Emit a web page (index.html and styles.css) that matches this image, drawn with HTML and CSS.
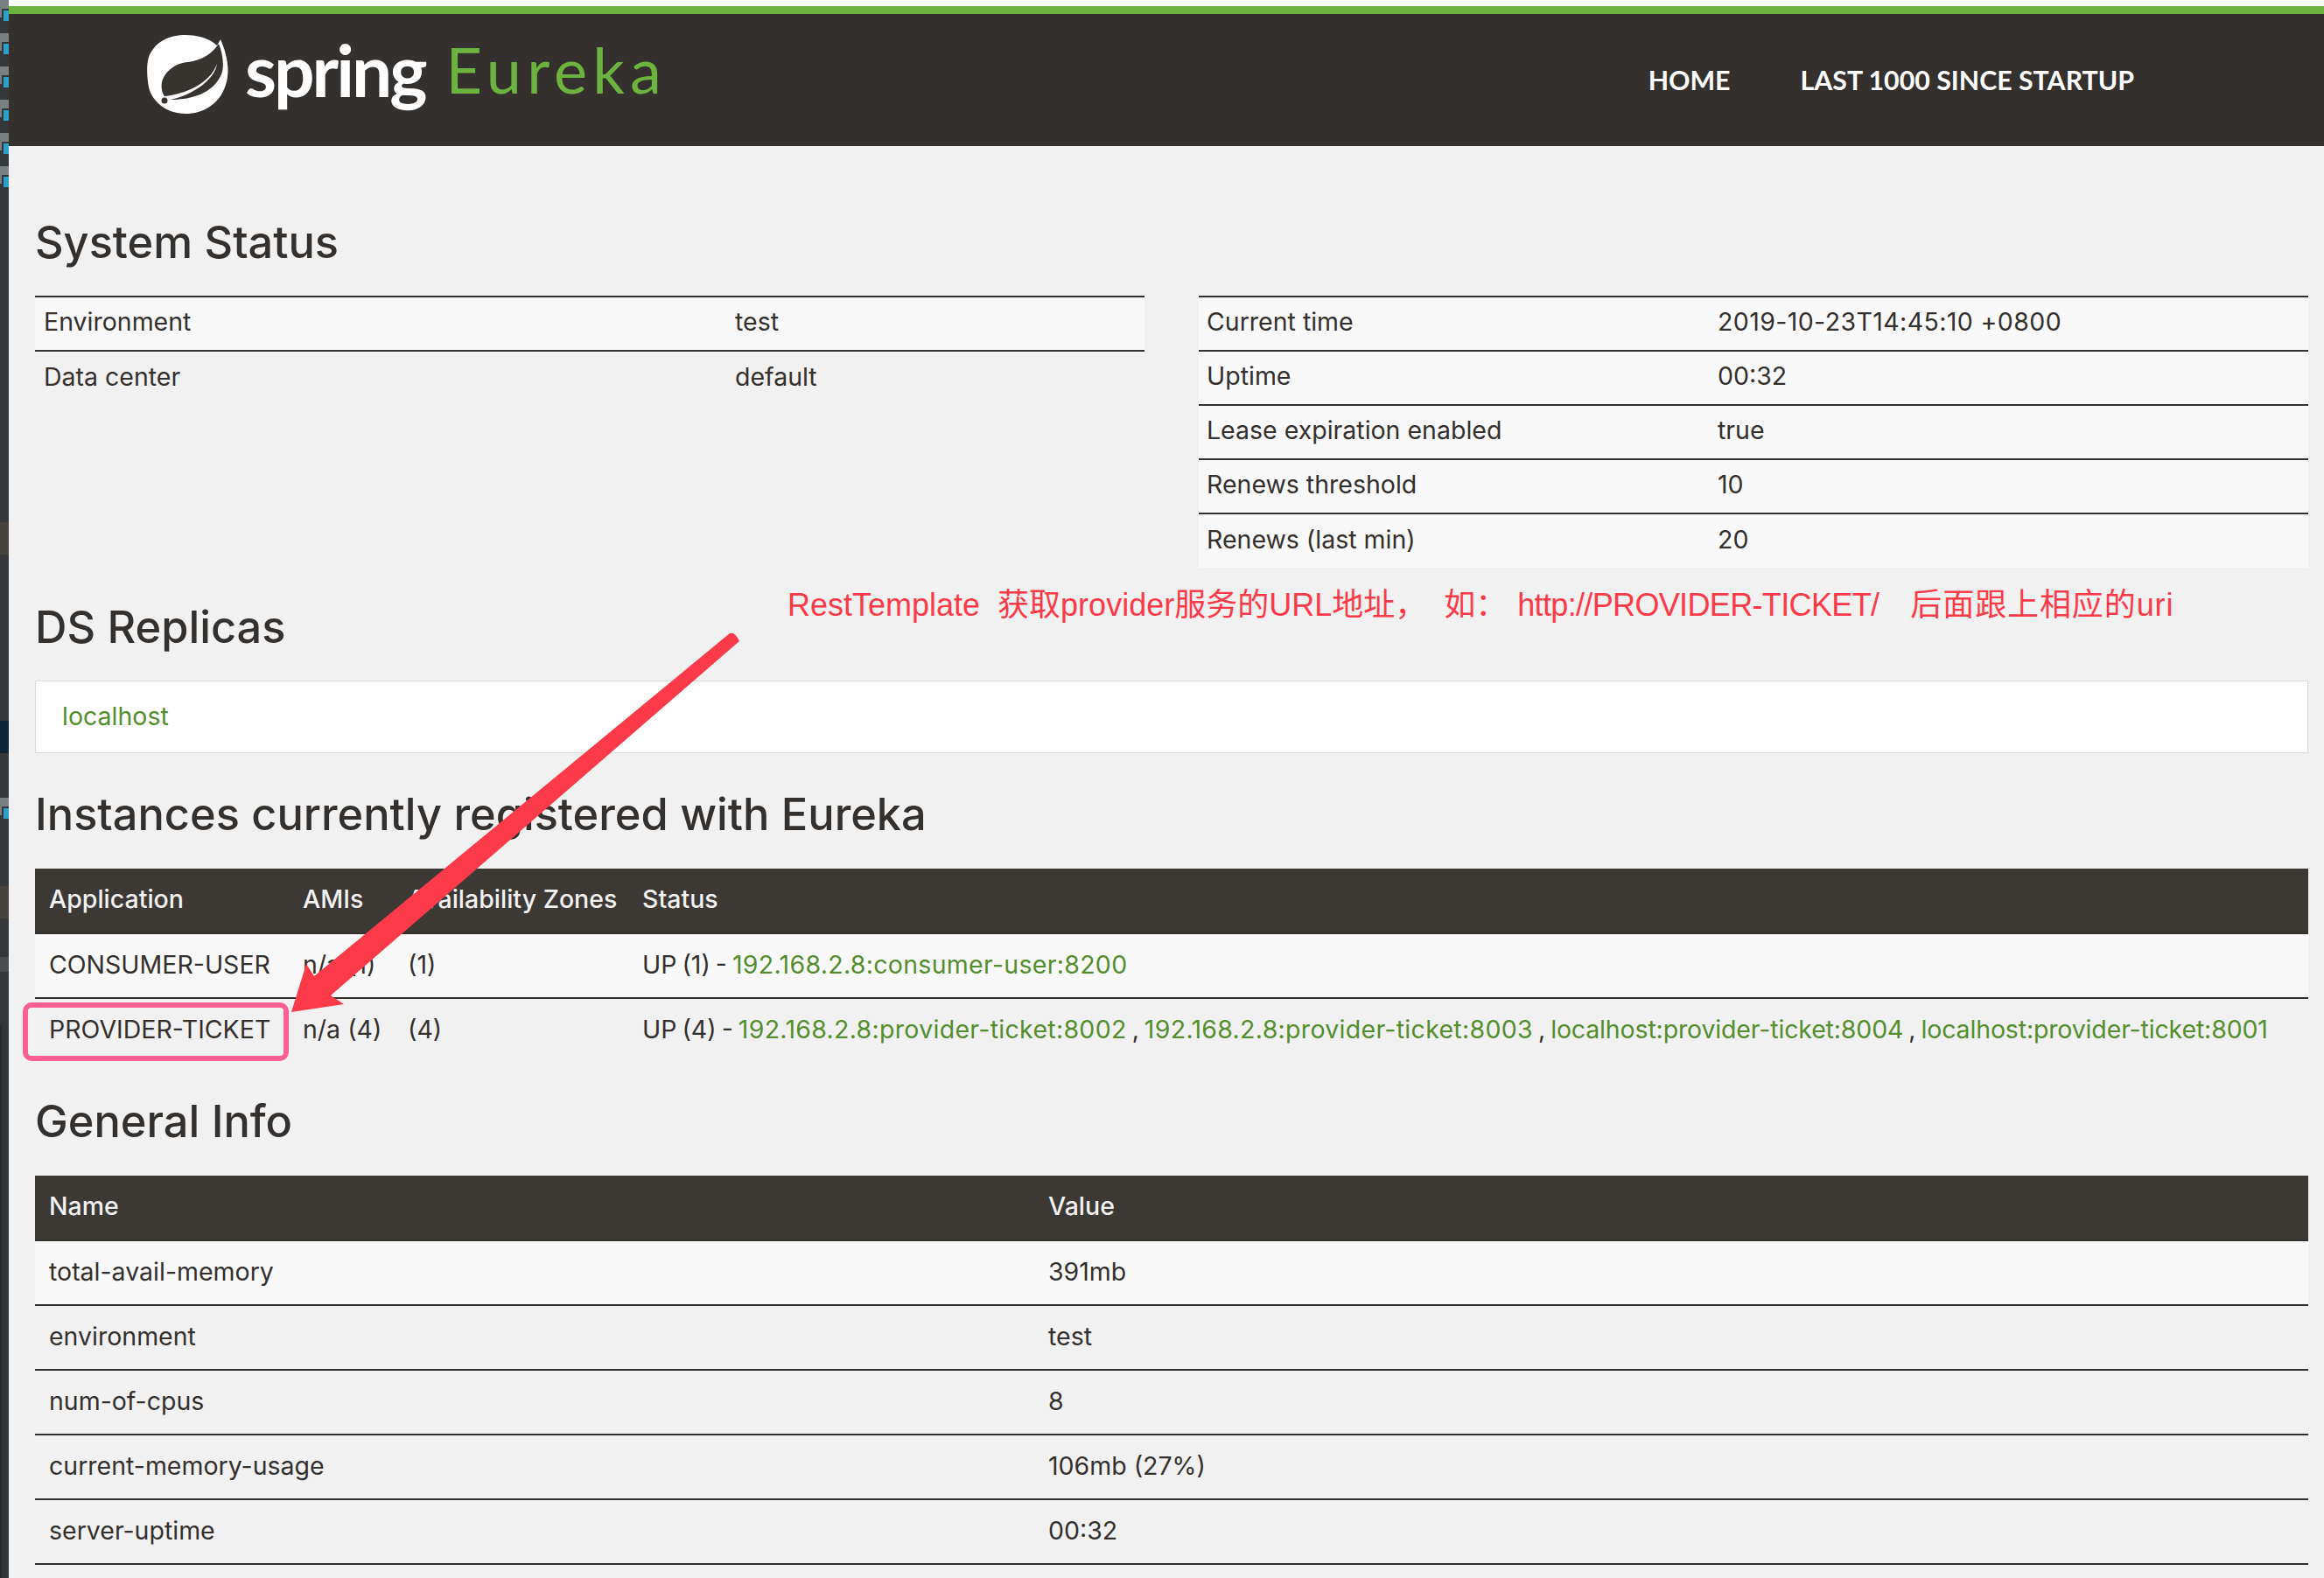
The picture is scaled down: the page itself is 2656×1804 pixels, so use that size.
FILE: index.html
```html
<!DOCTYPE html>
<html lang="en">
<head>
    <meta charset="UTF-8">
    <title>Eureka</title>
    <link rel="stylesheet" href="styles.css">
</head>
<body>
    <!-- slice of the editor window behind the browser -->
    <div class="sidebar">
        <div class="side-tab"></div>
        <div class="side-tab"></div>
        <div class="side-tab"></div>
        <div class="side-tab"></div>
        <div class="side-tab"></div>
        <div class="side-tab"></div>
        <div class="side-brown first-brown"></div>
        <div class="side-navy"></div>
        <div class="side-tab last-tab"></div>
        <div class="side-brown second-brown"></div>
        <div class="side-strip"></div>
        <div class="side-rest"></div>
    </div>
    <div class="page">
        <nav class="navbar">
            <div class="brand">
                <svg class="leaf" viewBox="0 0 130 110" width="130" height="110">
                    <path fill="#fff" d="M20 35C28 16 45 10 62 10C76 10 90 14 98 22L102 15C108 28 112 45 110 58C107 82 88 100 62 100C40 100 24 86 20 70C18 58 17 46 20 35Z"/>
                    <path fill="#37332f" d="M100 20C92 32 80 39 65 41C50 42 38 52 35 64C34 70 35 76 38 80C60 78 90 66 98 43C96 60 72 78 45 84C70 84 94 76 103 55C107 45 104 30 100 20Z"/>
                    <circle cx="38" cy="85" r="3.5" fill="#37332f"/>
                </svg>
                <span class="brand-spring">spring</span>
                <span class="brand-eureka">Eureka</span>
            </div>
            <div class="nav-links">
                <a>HOME</a>
                <a>LAST 1000 SINCE STARTUP</a>
            </div>
        </nav>

        <main class="content">
            <h1 class="status-title">System Status</h1>
            <div class="status-row">
                <table class="info-table env-table">
                    <tr class="odd"><td>Environment</td><td>test</td></tr>
                    <tr><td>Data center</td><td>default</td></tr>
                </table>
                <table class="info-table time-table">
                    <tr class="odd"><td>Current time</td><td class="timestamp">2019-10-23T14:45:10 +0800</td></tr>
                    <tr class="odd"><td>Uptime</td><td>00:32</td></tr>
                    <tr class="odd"><td>Lease expiration enabled</td><td>true</td></tr>
                    <tr class="odd"><td>Renews threshold</td><td>10</td></tr>
                    <tr class="odd"><td>Renews (last min)</td><td>20</td></tr>
                </table>
            </div>

            <h1 class="replicas-title">DS Replicas</h1>
            <div class="replicas"><a>localhost</a></div>

            <h1 class="instances-title">Instances currently registered with Eureka</h1>
            <table class="data-table instances">
                <thead>
                    <tr><th>Application</th><th>AMIs</th><th>Availability Zones</th><th>Status</th></tr>
                </thead>
                <tbody>
                    <tr class="odd">
                        <td>CONSUMER-USER</td><td>n/a (1)</td><td>(1)</td>
                        <td class="status-cell">UP (1) - <a>192.168.2.8:consumer-user:8200</a></td>
                    </tr>
                    <tr>
                        <td>PROVIDER-TICKET</td><td>n/a (4)</td><td>(4)</td>
                        <td class="status-cell">UP (4) - <a>192.168.2.8:provider-ticket:8002</a> , <a>192.168.2.8:provider-ticket:8003</a> , <a class="local-link">localhost:provider-ticket:8004</a> , <a class="local-link">localhost:provider-ticket:8001</a></td>
                    </tr>
                </tbody>
            </table>

            <h1 class="general-title">General Info</h1>
            <table class="data-table general">
                <thead>
                    <tr><th>Name</th><th>Value</th></tr>
                </thead>
                <tbody>
                    <tr class="odd"><td>total-avail-memory</td><td>391mb</td></tr>
                    <tr><td>environment</td><td>test</td></tr>
                    <tr><td>num-of-cpus</td><td>8</td></tr>
                    <tr><td>current-memory-usage</td><td>106mb (27%)</td></tr>
                    <tr><td>server-uptime</td><td>00:32</td></tr>
                </tbody>
            </table>
        </main>
    </div>

    <!-- annotation drawn over the page -->
    <p class="note">RestTemplate&nbsp; 获取provider服务的URL地址， &nbsp;如： &nbsp;<span class="note-url">http://PROVIDER-TICKET/</span> &nbsp; <span class="note-tail">后面跟上相应的uri</span></p>
    <div class="note-box"></div>
    <svg class="note-arrow" width="2656" height="1804" viewBox="0 0 2656 1804">
        <path fill="#fc3a4a" d="M834 724Q840 722 845 733L378 1138L393 1148L333 1157L350 1102L359 1116Z"/>
    </svg>
</body>
</html>
```

FILE: styles.css
```css
html, body {
    margin: 0;
    padding: 0;
}

body {
    display: flex;
    width: 2656px;
    height: 1804px;
    overflow: hidden;
    position: relative;
    font-family: "Inter", "Noto Sans CJK SC", sans-serif;
    font-size: 28.5px;
    color: #34302d;
    background: #f1f1f1;
}

.sidebar {
    width: 10px;
    flex: none;
    display: flex;
    flex-direction: column;
    background: #35383a;
}

.side-tab {
    height: 38px;
    flex: none;
    background:
        linear-gradient(#2f9fc9, #2f9fc9) 4px 12px / 6px 12px no-repeat,
        linear-gradient(#7b8083, #7b8083) 0 0 / 10px 10px no-repeat,
        linear-gradient(#7b8083, #7b8083) 0 10px / 2px 10px no-repeat;
}

.side-brown {
    height: 37px;
    flex: none;
    background: #45423c;
}

.first-brown { margin-top: 369px; }
.second-brown { margin-top: 63px; }

.side-navy {
    height: 37px;
    flex: none;
    margin-top: 190px;
    background: #0e2538;
}

.last-tab { margin-top: 51px; }

.side-strip {
    height: 17px;
    flex: none;
    margin-top: 44px;
    background: #4a4d4f;
}

.side-rest {
    flex: 1;
    margin-top: 60px;
    background: linear-gradient(90deg, #2a2c2e 2px, #333638 2px);
}

.page {
    flex: 1;
    min-width: 0;
    padding-top: 7px;
    background: #fff;
}

.navbar {
    display: flex;
    justify-content: space-between;
    height: 151px;
    border-top: 9px solid #6db33f;
    background: #34302d;
    color: #fff;
}

.brand {
    display: flex;
    align-items: flex-start;
    padding: 14px 0 0 140px;
}

.brand-spring {
    margin-top: 7px;
    font-family: "Lato", sans-serif;
    font-size: 82px;
    font-weight: 700;
    line-height: 84px;
    letter-spacing: -3px;
}

.brand-eureka {
    margin: 7px 0 0 24px;
    font-family: "Lato", sans-serif;
    font-size: 72px;
    line-height: 84px;
    letter-spacing: 6.2px;
    color: #6db33f;
}

.nav-links {
    display: flex;
    gap: 80px;
    padding: 57px 217px 0 0;
    font-family: "Lato", sans-serif;
    font-size: 30.3px;
    font-weight: 700;
}

.content {
    height: 1637px;
    padding: 0 18px 0 30px;
    background: #f1f1f1;
}

h1 {
    margin: 0;
    font-size: 50.5px;
    font-weight: 500;
    line-height: 60px;
    color: #34302d;
}

.status-title {
    padding-top: 80px;
    margin-bottom: 31px;
}

.status-row {
    display: flex;
    justify-content: space-between;
    height: 311px;
}

.info-table {
    width: 1268px;
    border-collapse: collapse;
    table-layout: fixed;
    align-self: flex-start;
}

.info-table td {
    height: 62px;
    padding: 0 0 5px 10px;
    box-sizing: border-box;
    border-top: 2px solid #34302d;
}

.time-table td {
    padding-left: 9px;
}

.timestamp {
    letter-spacing: 0.4px;
}

.odd {
    background: #f9f9f9;
}

.env-table td:first-child {
    width: 790px;
}

.time-table td:first-child {
    width: 584px;
}

.replicas-title {
    padding-top: 38px;
    margin-bottom: 31px;
}

.replicas {
    height: 81px;
    padding-left: 30px;
    line-height: 80px;
    background: #fff;
    border: 1px solid #ddd;
}

a {
    color: #548e2e;
}

.nav-links a {
    color: #fff;
}

.instances-title {
    padding-top: 40px;
    margin-bottom: 32px;
}

.general-title {
    padding-top: 38px;
    margin-bottom: 32px;
}

.data-table {
    width: 100%;
    border-collapse: collapse;
    table-layout: fixed;
}

.data-table th {
    height: 68px;
    padding: 0 0 5px 16px;
    text-align: left;
    font-weight: 500;
    color: #f1f1f1;
    background: #3c3834;
    border-bottom: 2px solid #34302d;
    white-space: nowrap;
}

.data-table td {
    height: 68px;
    padding: 0 0 4px 16px;
    border-bottom: 2px solid #34302d;
    white-space: nowrap;
}

.status-cell {
    word-spacing: -2px;
}

.status-cell a {
    letter-spacing: 0.3px;
}

.status-cell .local-link {
    letter-spacing: -0.15px;
}

.instances tr:last-child td {
    border-bottom: none;
}

.instances th:nth-child(1) { width: 274px; }
.instances th:nth-child(2) { width: 104px; }
.instances th:nth-child(3) { width: 252px; }

.general th:first-child {
    width: 1126px;
}

/* annotation */
.note {
    position: absolute;
    left: 900px;
    top: 668px;
    margin: 0;
    font-family: "Liberation Sans", "Noto Sans CJK SC", sans-serif;
    font-size: 36px;
    line-height: 48px;
    white-space: nowrap;
    color: #fc3a4a;
}

.note-url {
    margin: 0 6px 0 -8px;
    letter-spacing: -0.65px;
}

.note-tail {
    letter-spacing: 0.9px;
}

.note-box {
    position: absolute;
    left: 26px;
    top: 1146px;
    width: 292px;
    height: 55px;
    border: 6px solid #fb5f93;
    border-radius: 10px;
}

.note-arrow {
    position: absolute;
    left: 0;
    top: 0;
    pointer-events: none;
}
```
